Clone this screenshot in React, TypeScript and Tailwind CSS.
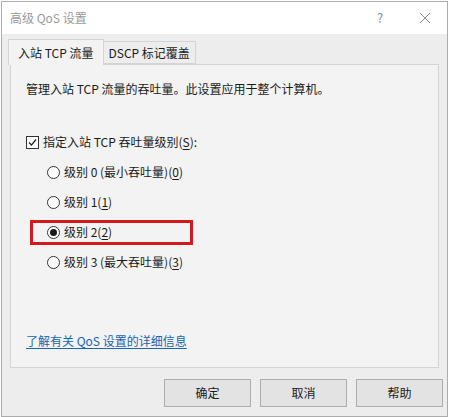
import type { ReactNode } from "react";

// Windows "高级 QoS 设置" dialog — inbound TCP throughput tab, level 2 picked
// and boxed in red.

const font = { fontFamily: '"Noto Sans CJK SC", "Noto Sans", sans-serif' };

function Mnemonic({ children }: { children: ReactNode }) {
  return <span className="underline underline-offset-2">{children}</span>;
}

function Radio({ checked }: { checked?: boolean }) {
  return (
    <span className="mr-[4px] flex h-[13px] w-[13px] shrink-0 items-center justify-center rounded-full border border-[#333] bg-white">
      {checked ? <span className="h-[7px] w-[7px] rounded-full bg-[#1a1a1a]" /> : null}
    </span>
  );
}

const levels = [
  { label: "级别 0 (最小吞吐量)", key: "0" },
  { label: "级别 1", key: "1" },
  { label: "级别 2", key: "2", checked: true },
  { label: "级别 3 (最大吞吐量)", key: "3" },
];

export default function App() {
  return (
    <div className="h-[417px] w-[450px] bg-white pl-[1px] pt-[1px] text-[12px] text-[#1a1a1a]" style={font}>
      <div className="flex h-[416px] w-[447px] flex-col border border-[#acacac] bg-[#ededed]">
        {/* title bar */}
        <div className="flex h-[32px] shrink-0 items-center bg-white pl-[8px] text-[#9a9a9a]">
          <span className="flex-1 text-[12px]">高级 QoS 设置</span>
          <span className="w-[20px] text-center text-[13px] text-[#8a8a8a]">?</span>
          <span className="ml-[25px] mr-[12px] flex w-[20px] items-center justify-center">
            <svg width="12" height="12" viewBox="0 0 12 12" fill="none" stroke="#8a8a8a" strokeWidth="1">
              <path d="M1 1 L11 11 M11 1 L1 11" />
            </svg>
          </span>
        </div>

        {/* tabs */}
        <div className="flex pl-[6px] pt-[5px]">
          <div className="relative z-10 -mb-px flex h-[26px] items-center border border-b-0 border-[#d4d4d4] bg-[#f3f3f3] px-[9px]">
            入站 TCP 流量
          </div>
          <div className="mt-[2px] flex h-[23px] items-center border border-l-0 border-[#d4d4d4] bg-[#ededed] px-[5px]">
            DSCP 标记覆盖
          </div>
        </div>

        {/* panel */}
        <div className="ml-[8px] flex h-[304px] w-[429px] flex-col border border-[#d4d4d4] bg-[#f3f3f3] pl-[15px]">
          <div className="mt-[14px] flex h-[20px] items-center">
            管理入站 TCP 流量的吞吐量。此设置应用于整个计算机。
          </div>

          <div className="mt-[33px] flex h-[20px] items-center">
            <span className="mr-[4px] flex h-[13px] w-[13px] shrink-0 items-center justify-center border border-[#333] bg-white">
              <svg width="11" height="11" viewBox="0 0 11 11" fill="none" stroke="#222" strokeWidth="1.2">
                <path d="M2 5.5 L4.5 8 L9 2.5" />
              </svg>
            </span>
            <span>
              指定入站 TCP 吞吐量级别(<Mnemonic>S</Mnemonic>):
            </span>
          </div>

          <div className="mt-[5px] flex flex-col">
            {levels.map((level) =>
              level.checked ? (
                <div key={level.key} className="flex h-[30px] items-center">
                  <div className="ml-[4px] flex h-[25px] w-[163px] items-center border-[3px] border-[#d3181e] pl-[14px]">
                    <Radio checked />
                    <span>
                      {level.label}(<Mnemonic>{level.key}</Mnemonic>)
                    </span>
                  </div>
                </div>
              ) : (
                <div key={level.key} className="flex h-[30px] items-center pl-[21px]">
                  <Radio />
                  <span>
                    {level.label}(<Mnemonic>{level.key}</Mnemonic>)
                  </span>
                </div>
              ),
            )}
          </div>

          <div className="mt-[54px] flex h-[20px] items-center">
            <span className="text-[#1a64b4] underline underline-offset-2">了解有关 QoS 设置的详细信息</span>
          </div>
        </div>

        {/* buttons */}
        <div className="mr-[4px] mt-[11px] flex justify-end gap-[9px]">
          {["确定", "取消", "帮助"].map((label) => (
            <button
              key={label}
              type="button"
              className="flex h-[28px] w-[87px] items-center justify-center border border-[#adadad] bg-[#e3e3e3] text-[12px] text-[#1a1a1a]"
            >
              {label}
            </button>
          ))}
        </div>
      </div>
    </div>
  );
}
